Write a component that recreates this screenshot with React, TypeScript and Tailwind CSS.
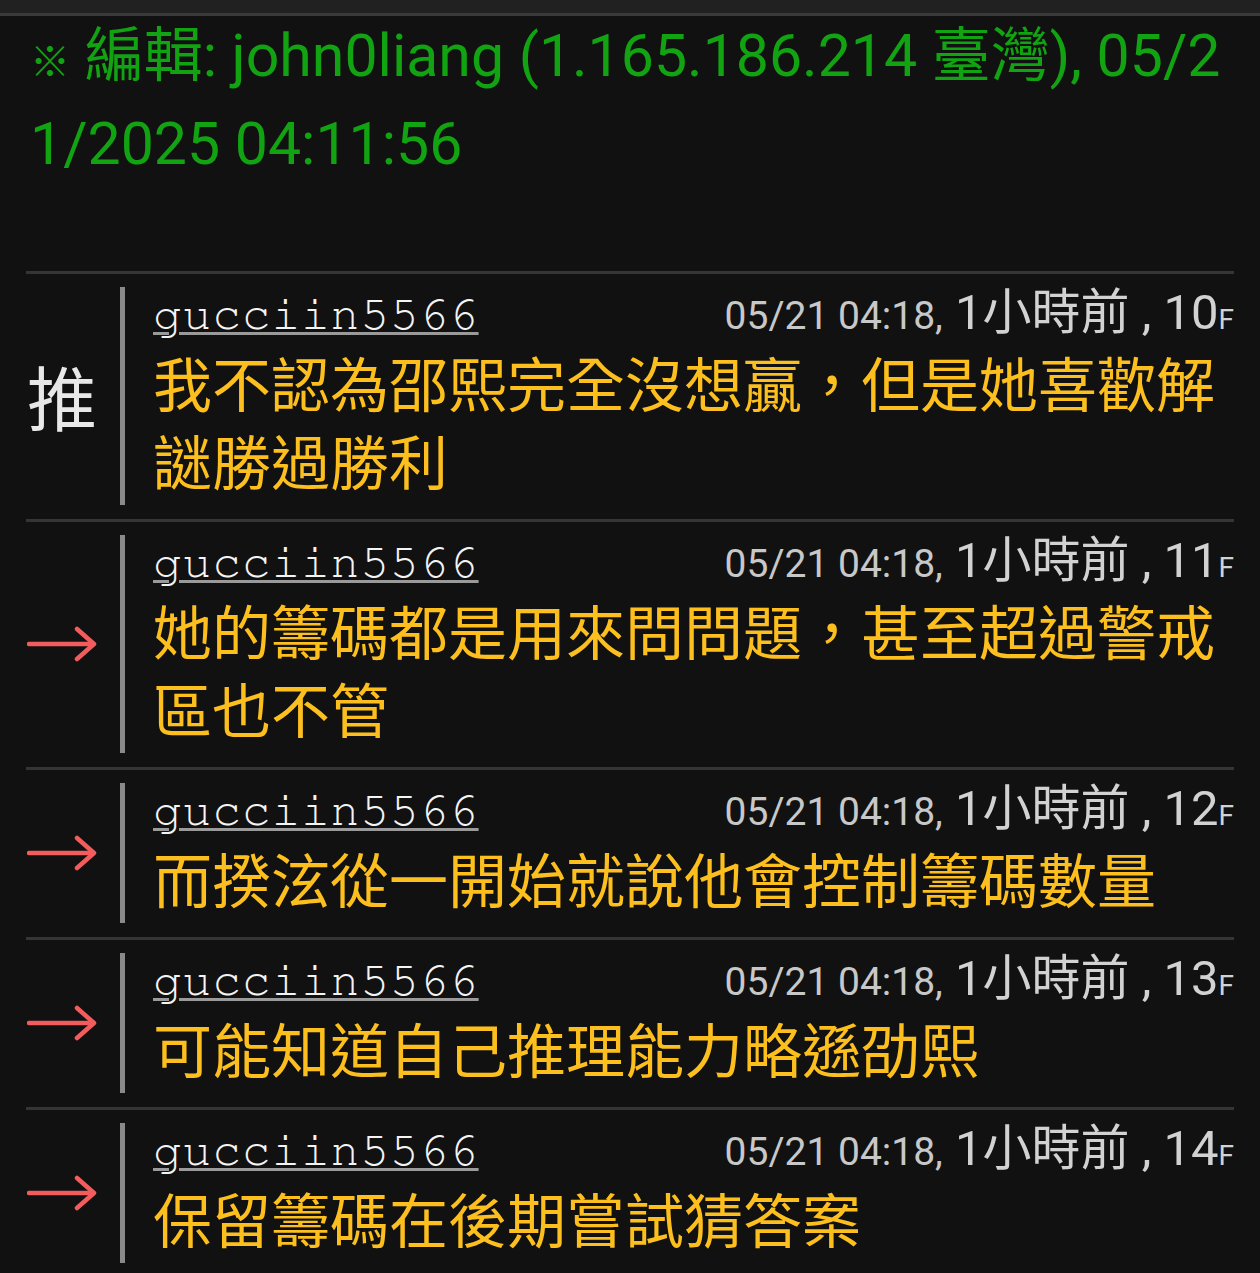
const comments = [
  { tag: "推", floor: "10", text: "我不認為邵熙完全沒想贏，但是她喜歡解謎勝過勝利" },
  { tag: "→", floor: "11", text: "她的籌碼都是用來問問題，甚至超過警戒區也不管" },
  { tag: "→", floor: "12", text: "而揆泫從一開始就說他會控制籌碼數量" },
  { tag: "→", floor: "13", text: "可能知道自己推理能力略遜劭熙" },
  { tag: "→", floor: "14", text: "保留籌碼在後期嘗試猜答案" },
];

function Arrow() {
  return (
    <svg width="70" height="36" viewBox="0 0 70 36" fill="none" stroke="#f25c5c" strokeWidth="4.5" strokeLinecap="round" strokeLinejoin="round">
      <path d="M2 18 H66" />
      <path d="M50 3 L67 18 L50 33" />
    </svg>
  );
}

function CommentRow({ tag, floor, text }: { tag: string; floor: string; text: string }) {
  return (
    <div className="flex border-t-[3px] border-[#353535] pt-[13px] pb-[14px]">
      <div className="flex w-[94px] shrink-0 items-center justify-center pr-[22px]">
        {tag === "推" ? (
          <span className="text-[70px] leading-none text-[#e8e8e8] [font-family:'Noto_Sans_CJK_TC',sans-serif]">推</span>
        ) : (
          <Arrow />
        )}
      </div>
      <div className="w-[5px] shrink-0 bg-[#8a8a8a]" />
      <div className="min-w-0 flex-1 pl-[28px] pb-[6px]">
        <div className="flex h-[56px] items-baseline justify-between">
          <span className="text-[48px] leading-[56px] tracking-[0.8px] text-[#f4f4f4] underline decoration-[#9a9a9a] decoration-[3px] underline-offset-[3px] [font-family:'Nimbus_Mono_PS','FreeMono','Liberation_Mono',monospace]">
            gucciin5566
          </span>
          <span className="whitespace-nowrap leading-none text-[#d2d2d2] [font-family:Roboto,'Noto_Sans_CJK_TC',sans-serif]">
            <span className="text-[39px] text-[#c8c8c8]">05/21 04:18,</span>
            <span className="text-[49px]"> 1小時前 , {floor}</span>
            <span className="text-[28px]">F</span>
          </span>
        </div>
        <p className="text-[59px] leading-[78px] text-[#fcbf1e] [font-family:'Noto_Sans_CJK_TC',sans-serif]">{text}</p>
      </div>
    </div>
  );
}

export default function App() {
  return (
    <div className="min-h-screen bg-[#111111] overflow-hidden">
      <div className="h-[16px] border-b-[3px] border-[#3a3a3a] bg-[#212121]" />
      <div className="-mt-[4px] px-[30px] pb-[83px]">
        <p className="break-all text-[59px] leading-[88px] text-[#12a312] [font-family:Roboto,'Noto_Sans_CJK_TC',sans-serif]">
          <span className="font-bold text-[40px] leading-none [font-family:'Noto_Sans_CJK_TC',sans-serif]">※</span> 編輯: john0liang (1.165.186.214 臺灣), 05/21/2025 04:11:56
        </p>
      </div>
      <div className="mx-[26px]">
        {comments.map((c) => (
          <CommentRow key={c.floor} {...c} />
        ))}
      </div>
    </div>
  );
}
